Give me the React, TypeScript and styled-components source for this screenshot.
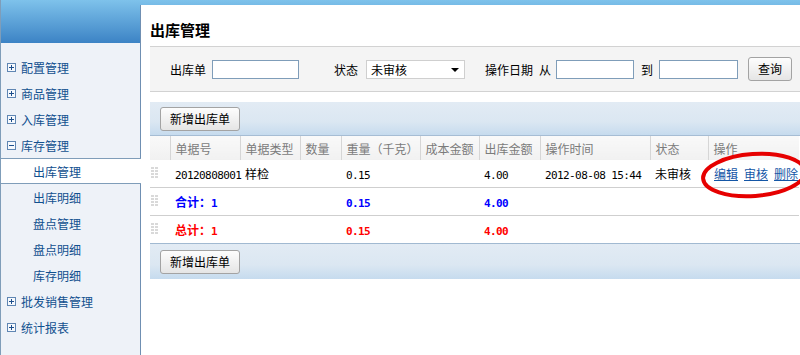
import styled, { createGlobalStyle } from "styled-components";

const GlobalStyle = createGlobalStyle`
  html, body {
    margin: 0;
    padding: 0;
    overflow: hidden;
  }
  body {
    font-family: "Noto Sans CJK SC", "Liberation Sans", sans-serif;
    font-size: 12px;
    color: #000;
  }
`;

type MenuEntry = { label: string; kind: "group" | "open" | "sub"; active?: boolean };

const menu: MenuEntry[] = [
  { label: "配置管理", kind: "group" },
  { label: "商品管理", kind: "group" },
  { label: "入库管理", kind: "group" },
  { label: "库存管理", kind: "open" },
  { label: "出库管理", kind: "sub", active: true },
  { label: "出库明细", kind: "sub" },
  { label: "盘点管理", kind: "sub" },
  { label: "盘点明细", kind: "sub" },
  { label: "库存明细", kind: "sub" },
  { label: "批发销售管理", kind: "group" },
  { label: "统计报表", kind: "group" },
];

const columns = [
  { title: "", width: 20 },
  { title: "单据号", width: 70 },
  { title: "单据类型", width: 60 },
  { title: "数量", width: 41 },
  { title: "重量（千克）", width: 79 },
  { title: "成本金额", width: 59 },
  { title: "出库金额", width: 61 },
  { title: "操作时间", width: 110 },
  { title: "状态", width: 58 },
  { title: "操作", width: 91 },
];

function ToggleIcon({ open }: { open: boolean }) {
  return (
    <svg width="9" height="9" viewBox="0 0 9 9">
      <rect x="0.5" y="0.5" width="8" height="8" fill="#f6f9fd" stroke="#5f86b3" />
      <line x1="2" y1="4.5" x2="7" y2="4.5" stroke="#1d4f8c" />
      {!open && <line x1="4.5" y1="2" x2="4.5" y2="7" stroke="#1d4f8c" />}
    </svg>
  );
}

function Grip() {
  return (
    <svg width="8" height="13" viewBox="0 0 8 13">
      {[0, 3, 6, 9].map((y) => (
        <g key={y} fill="#d9d9d9">
          <rect x="0" y={y} width="3" height="2" />
          <rect x="4" y={y} width="3" height="2" />
        </g>
      ))}
    </svg>
  );
}

export default function App() {
  return (
    <>
      <GlobalStyle />
      <Frame>
        <Sidebar>
          <SideHead />
          <Menu>
            {menu.map((m) => (
              <MenuItem key={m.label} $sub={m.kind === "sub"} $active={!!m.active}>
                {m.kind !== "sub" && <ToggleIcon open={m.kind === "open"} />}
                {m.label}
              </MenuItem>
            ))}
          </Menu>
        </Sidebar>

        <Content>
          <Title>出库管理</Title>

          <FilterBar>
            <Label>出库单</Label>
            <TextInput $w={87} />
            <Label $gap={35}>状态</Label>
            <FakeSelect>
              未审核
              <Caret />
            </FakeSelect>
            <Label $gap={20}>操作日期</Label>
            <Label>从</Label>
            <TextInput $w={78} $gap={5} />
            <Label $gap={7}>到</Label>
            <TextInput $w={79} />
            <Button $gap={10}>查询</Button>
          </FilterBar>

          <Toolbar>
            <Button>新增出库单</Button>
          </Toolbar>

          <TableArea>
            <Grid>
              <colgroup>
                {columns.map((c, i) => (
                  <col key={i} style={{ width: c.width }} />
                ))}
              </colgroup>
              <thead>
                <tr>
                  {columns.map((c, i) => (
                    <Th key={i}>{c.title}</Th>
                  ))}
                </tr>
              </thead>
              <tbody>
                <tr>
                  <GripCell><Grip /></GripCell>
                  <Td><Num>20120808001</Num></Td>
                  <Td>样检</Td>
                  <Td />
                  <Td><Num>0.15</Num></Td>
                  <Td />
                  <Td><Num>4.00</Num></Td>
                  <Td><Num>2012-08-08 15:44</Num></Td>
                  <Td>未审核</Td>
                  <Td>
                    <Actions>
                      <ActionLink href="#">编辑</ActionLink>
                      <ActionLink href="#">审核</ActionLink>
                      <ActionLink href="#">删除</ActionLink>
                    </Actions>
                  </Td>
                </tr>
                <tr>
                  <GripCell><Grip /></GripCell>
                  <Td $tone="#0000ff" $bold>合计：<Num>1</Num></Td>
                  <Td /><Td />
                  <Td $tone="#0000ff" $bold><Num>0.15</Num></Td>
                  <Td />
                  <Td $tone="#0000ff" $bold><Num>4.00</Num></Td>
                  <Td /><Td /><Td />
                </tr>
                <tr>
                  <GripCell><Grip /></GripCell>
                  <Td $tone="#ff0000" $bold>总计：<Num>1</Num></Td>
                  <Td /><Td />
                  <Td $tone="#ff0000" $bold><Num>0.15</Num></Td>
                  <Td />
                  <Td $tone="#ff0000" $bold><Num>4.00</Num></Td>
                  <Td /><Td /><Td />
                </tr>
              </tbody>
            </Grid>

            <Highlight width="116" height="60" viewBox="0 0 116 60">
              <ellipse
                cx="58"
                cy="30"
                rx="51"
                ry="21"
                fill="none"
                stroke="#e60000"
                strokeWidth="4"
                transform="rotate(-4 58 30)"
              />
            </Highlight>
          </TableArea>

          <Toolbar $bottom>
            <Button>新增出库单</Button>
          </Toolbar>
        </Content>
      </Frame>
    </>
  );
}

const Frame = styled.div`
  display: flex;
  height: 355px;
  background:
    linear-gradient(#7ec2eb, #3c83c5) 0 0 / 100% 43px no-repeat,
    #eef2f8;
`;

const Sidebar = styled.aside`
  width: 140px;
  flex: none;
  border-left: 1px solid #7f9db9;
  box-sizing: border-box;
  display: flex;
  flex-direction: column;
`;

const SideHead = styled.div`
  height: 43px;
`;

const Menu = styled.nav`
  padding-top: 11px;
  display: flex;
  flex-direction: column;
`;

const MenuItem = styled.div<{ $sub: boolean; $active: boolean }>`
  display: flex;
  align-items: center;
  gap: 5px;
  height: ${(p) => (p.$active ? 24 : 26)}px;
  padding-left: ${(p) => (p.$sub ? 32 : 6)}px;
  color: #11508f;
  font-size: 12px;
  white-space: nowrap;
  ${(p) =>
    p.$active &&
    `
    background: #fff;
    border-top: 1px solid #7f9db9;
    border-bottom: 1px solid #7f9db9;
    margin-right: -1px;
    position: relative;
    z-index: 1;
  `}
`;

const Content = styled.main`
  flex: 1;
  min-width: 0;
  margin-top: 5px;
  background: #fff;
  border-left: 1px solid #6f8fb2;
  padding-left: 9px;
`;

const Title = styled.h1`
  margin: 0;
  padding: 16px 0 7px;
  line-height: 18px;
  font-size: 15px;
  font-weight: bold;
`;

const FilterBar = styled.div`
  display: flex;
  align-items: center;
  height: 44px;
  padding-left: 20px;
  background: #f4f4f4;
  border-top: 1px solid #d2d2d2;
  border-bottom: 1px solid #d2d2d2;
  white-space: nowrap;
`;

const Label = styled.span<{ $gap?: number }>`
  margin-left: ${(p) => p.$gap ?? 0}px;
  margin-right: 6px;
  font-size: 12px;
`;

const TextInput = styled.input<{ $w: number; $gap?: number }>`
  box-sizing: border-box;
  width: ${(p) => p.$w}px;
  height: 19px;
  margin-left: ${(p) => (p.$gap ?? 6) - 6}px;
  border: 1px solid #7f9db9;
  background: #fff;
  padding: 0;
  outline: none;
`;

const FakeSelect = styled.div`
  position: relative;
  box-sizing: border-box;
  width: 99px;
  height: 19px;
  margin-left: 2px;
  padding-left: 4px;
  border: 1px solid #cfcfcf;
  background: #fff;
  font-size: 12px;
  line-height: 17px;
`;

const Caret = styled.span`
  position: absolute;
  right: 5px;
  top: 7px;
  border-left: 4px solid transparent;
  border-right: 4px solid transparent;
  border-top: 4px solid #000;
`;

const Button = styled.button<{ $gap?: number }>`
  height: 24px;
  margin-left: ${(p) => p.$gap ?? 0}px;
  padding: 0 9px;
  border: 1px solid #a3a3a3;
  border-radius: 3px;
  background: linear-gradient(#fdfdfd, #e5e5e5);
  font-family: inherit;
  font-size: 12px;
  color: #000;
  line-height: 22px;
`;

const Toolbar = styled.div<{ $bottom?: boolean }>`
  display: flex;
  align-items: center;
  height: 33px;
  margin-top: ${(p) => (p.$bottom ? 0 : 10)}px;
  padding-left: 10px;
  background: linear-gradient(#e2ebf4, #dbe7f2 60%, #c6dbee);
  ${(p) =>
    p.$bottom
      ? "border-top: 1px solid #a1b9d1; height: 35px;"
      : "border-bottom: 1px solid #a6bdd4;"}
`;

const TableArea = styled.div`
  position: relative;
`;

const Grid = styled.table`
  width: 649px;
  table-layout: fixed;
  border-collapse: collapse;
`;

const Th = styled.th`
  height: 24px;
  padding: 0 0 0 5px;
  text-align: left;
  font-weight: normal;
  font-size: 12px;
  color: #7b7b7b;
  background: linear-gradient(#f9f9f9, #f1f1f1);
  border-right: 1px solid #d6d6d6;
  white-space: nowrap;
  overflow: hidden;
  &:last-child {
    border-right: none;
  }
`;

const Td = styled.td<{ $tone?: string; $bold?: boolean }>`
  height: 27px;
  padding: 0 0 0 5px;
  border-bottom: 1px solid #cfcfcf;
  white-space: nowrap;
  font-size: 12px;
  color: ${(p) => p.$tone ?? "#000"};
  font-weight: ${(p) => (p.$bold ? "bold" : "normal")};
  tr:last-child > & {
    border-bottom: none;
  }
`;

const GripCell = styled(Td)`
  padding-left: 1px;
  line-height: 0;
`;

const Num = styled.span`
  font-family: "DejaVu Sans Mono", "Liberation Mono", monospace;
  font-size: 11px;
  letter-spacing: -0.6px;
`;

const Actions = styled.div`
  display: flex;
  gap: 6px;
  padding-left: 1px;
`;

const ActionLink = styled.a`
  color: #1456a6;
  text-decoration: underline;
  font-size: 12px;
`;

const Highlight = styled.svg`
  position: absolute;
  left: 546px;
  top: 9px;
  overflow: visible;
  pointer-events: none;
`;
